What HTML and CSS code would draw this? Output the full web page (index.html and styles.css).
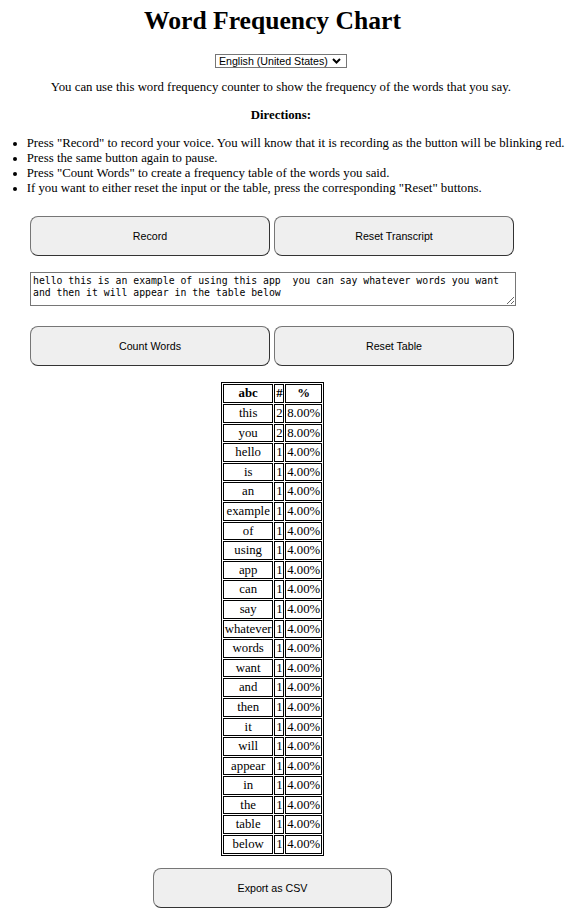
FILE: index.html
```html
<!DOCTYPE html>
<html lang="en">
<head>
<meta charset="utf-8">
<title>Word Frequency Chart</title>
<link rel="stylesheet" href="styles.css">
</head>
<body>
<div class="col">
  <h1 class="title">Word Frequency Chart</h1>
</div>
<div class="head">
  <div class="lang-wrap">
    <select class="lang">
      <option>English (United States)</option>
    </select>
    <svg class="chev" width="9" height="6" viewBox="0 0 9 6" aria-hidden="true"><path d="M1 1 L4.5 4.5 L8 1" fill="none" stroke="#000" stroke-width="2"/></svg>
  </div>
  <p class="intro">You can use this word frequency counter to show the frequency of the words that you say.</p>
  <p class="directions">Directions:</p>
</div>
<ul class="steps">
  <li>Press "Record" to record your voice. You will know that it is recording as the button will be blinking red.</li>
  <li>Press the same button again to pause.</li>
  <li>Press "Count Words" to create a frequency table of the words you said.</li>
  <li>If you want to either reset the input or the table, press the corresponding "Reset" buttons.</li>
</ul>
<div class="col">
  <div class="btn-row first">
    <button class="btn">Record</button>
    <button class="btn">Reset Transcript</button>
  </div>
  <textarea class="transcript" rows="2">hello this is an example of using this app  you can say whatever words you want and then it will appear in the table below</textarea>
  <div class="btn-row second">
    <button class="btn">Count Words</button>
    <button class="btn">Reset Table</button>
  </div>
  <table class="freq">
    <thead>
      <tr><th>abc</th><th>#</th><th>%</th></tr>
    </thead>
    <tbody>
      <tr><td>this</td><td>2</td><td>8.00%</td></tr>
      <tr><td>you</td><td>2</td><td>8.00%</td></tr>
      <tr><td>hello</td><td>1</td><td>4.00%</td></tr>
      <tr><td>is</td><td>1</td><td>4.00%</td></tr>
      <tr><td>an</td><td>1</td><td>4.00%</td></tr>
      <tr><td>example</td><td>1</td><td>4.00%</td></tr>
      <tr><td>of</td><td>1</td><td>4.00%</td></tr>
      <tr><td>using</td><td>1</td><td>4.00%</td></tr>
      <tr><td>app</td><td>1</td><td>4.00%</td></tr>
      <tr><td>can</td><td>1</td><td>4.00%</td></tr>
      <tr><td>say</td><td>1</td><td>4.00%</td></tr>
      <tr><td>whatever</td><td>1</td><td>4.00%</td></tr>
      <tr><td>words</td><td>1</td><td>4.00%</td></tr>
      <tr><td>want</td><td>1</td><td>4.00%</td></tr>
      <tr><td>and</td><td>1</td><td>4.00%</td></tr>
      <tr><td>then</td><td>1</td><td>4.00%</td></tr>
      <tr><td>it</td><td>1</td><td>4.00%</td></tr>
      <tr><td>will</td><td>1</td><td>4.00%</td></tr>
      <tr><td>appear</td><td>1</td><td>4.00%</td></tr>
      <tr><td>in</td><td>1</td><td>4.00%</td></tr>
      <tr><td>the</td><td>1</td><td>4.00%</td></tr>
      <tr><td>table</td><td>1</td><td>4.00%</td></tr>
      <tr><td>below</td><td>1</td><td>4.00%</td></tr>
    </tbody>
  </table>
  <div class="export-row">
    <button class="btn">Export as CSV</button>
  </div>
</div>
</body>
</html>
```

FILE: styles.css
```css
html, body {
  background: #ffffff;
}
body {
  margin: 6.4px;
  font-family: "Liberation Serif", "Times New Roman", serif;
  font-size: 12.8px;
  color: #000000;
}
.col {
  margin-left: 23.6px;
  width: 485px;
}
.title {
  margin: 0 0 17.15px;
  font-size: 25.6px;
  font-weight: bold;
  text-align: center;
}
.head {
  width: 549px;
  text-align: center;
}
.lang-wrap {
  position: relative;
  width: 132px;
  height: 14px;
  margin: 0 auto;
}
.lang {
  display: block;
  box-sizing: border-box;
  width: 132px;
  height: 14px;
  margin: 0;
  padding: 0 0 0 3px;
  font-family: "Liberation Sans", Arial, sans-serif;
  font-size: 10.67px;
  line-height: 12px;
  color: #000;
  background: #fff;
  border: 1px solid #767676;
  border-radius: 0;
  appearance: none;
  -webkit-appearance: none;
}
.chev {
  position: absolute;
  right: 6px;
  top: 4px;
  pointer-events: none;
}
.intro {
  margin: 12.8px 0;
}
.directions {
  margin: 12.8px 0;
  font-weight: bold;
}
.steps {
  margin: 12.8px 0 0;
  padding-left: 20.3px;
}
.btn-row {
  display: flex;
  gap: 4px;
}
.btn-row.first {
  margin-top: 20px;
}
.btn-row.second {
  margin-top: 20px;
}
.btn {
  width: 240px;
  height: 40px;
  padding: 0;
  font-family: "Liberation Sans", Arial, sans-serif;
  font-size: 10.67px;
  color: #000;
  background: #efefef;
  border: 1px solid #767676;
  border-bottom-color: #333;
  border-right-color: #333;
  border-radius: 8px;
}
.transcript {
  display: block;
  box-sizing: border-box;
  width: 486px;
  height: 34px;
  margin-top: 16px;
  padding: 1.6px 2px;
  font-family: "DejaVu Sans Mono", monospace;
  font-size: 9.8px;
  line-height: 12.7px;
  color: #000;
  border: 1px solid #767676;
  resize: both;
}
.freq {
  margin: 16.5px auto 0;
  border: 1px solid #000;
  border-spacing: 1.6px;
  text-align: center;
}
.freq th,
.freq td {
  border: 1px solid #000;
  padding: 1px 0.8px;
  line-height: 14.6px;
}
.export-row {
  display: flex;
  justify-content: center;
  margin-top: 12px;
}
.export-row .btn {
  width: 239px;
}
```
